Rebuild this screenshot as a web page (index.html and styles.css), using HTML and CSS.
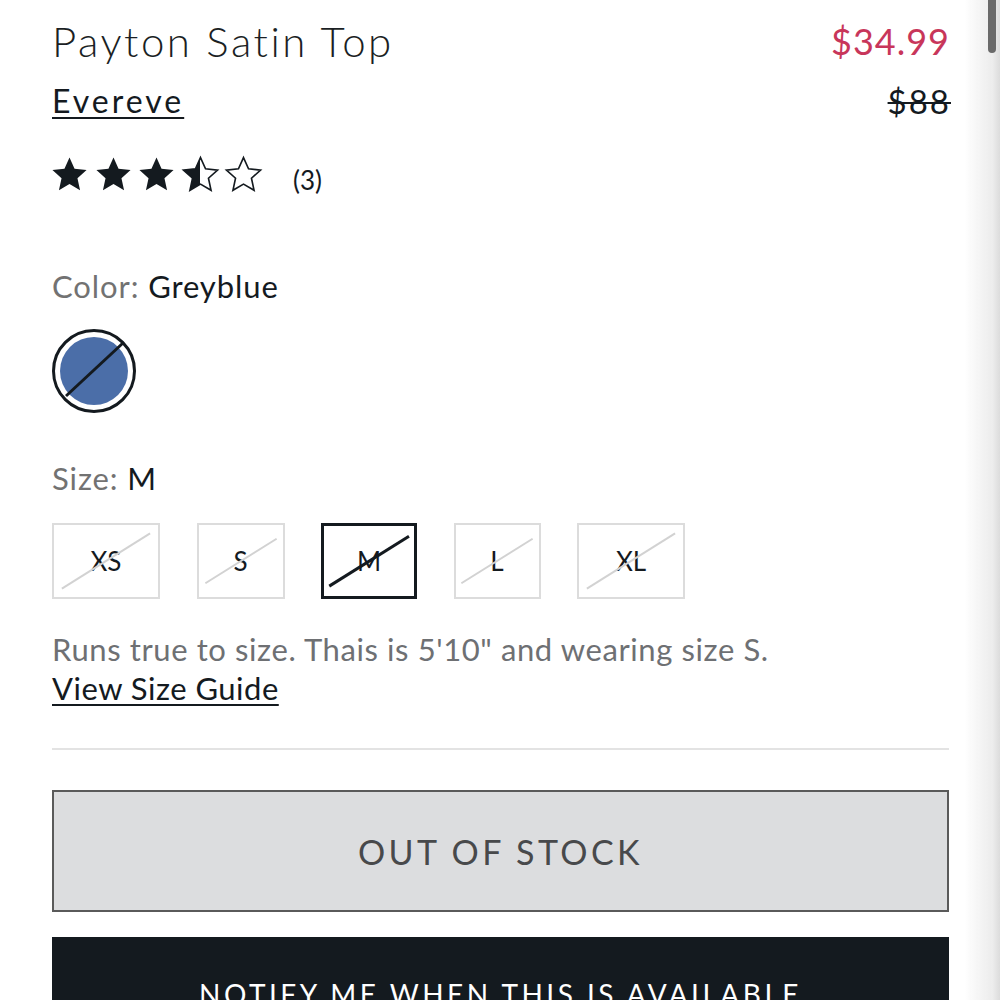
FILE: index.html
```html
<!DOCTYPE html>
<html lang="en">
<head>
<meta charset="utf-8">
<title>Payton Satin Top</title>
<link rel="stylesheet" href="styles.css">
</head>
<body>
<main class="page">
  <header class="head">
    <div class="names">
      <h1 class="title">Payton Satin Top</h1>
      <a class="brand" href="#">Evereve</a>
    </div>
    <div class="prices">
      <div class="sale">$34.99</div>
      <div class="orig">$88</div>
    </div>
  </header>

  <div class="rating">
    <div class="stars">
      <svg class="star" viewBox="0 0 24 24"><path class="full" d="M12 1.6l3.1 6.9 7.4.8-5.6 5 1.6 7.4L12 17.9l-6.5 3.8 1.6-7.4-5.6-5 7.4-.8z"/></svg>
      <svg class="star" viewBox="0 0 24 24"><path class="full" d="M12 1.6l3.1 6.9 7.4.8-5.6 5 1.6 7.4L12 17.9l-6.5 3.8 1.6-7.4-5.6-5 7.4-.8z"/></svg>
      <svg class="star" viewBox="0 0 24 24"><path class="full" d="M12 1.6l3.1 6.9 7.4.8-5.6 5 1.6 7.4L12 17.9l-6.5 3.8 1.6-7.4-5.6-5 7.4-.8z"/></svg>
      <svg class="star" viewBox="0 0 24 24"><defs><linearGradient id="half"><stop offset="50%" stop-color="#141a1f"/><stop offset="50%" stop-color="#fff"/></linearGradient></defs><path class="half" d="M12 1.6l3.1 6.9 7.4.8-5.6 5 1.6 7.4L12 17.9l-6.5 3.8 1.6-7.4-5.6-5 7.4-.8z"/></svg>
      <svg class="star" viewBox="0 0 24 24"><path class="empty" d="M12 1.6l3.1 6.9 7.4.8-5.6 5 1.6 7.4L12 17.9l-6.5 3.8 1.6-7.4-5.6-5 7.4-.8z"/></svg>
    </div>
    <span class="count">(3)</span>
  </div>

  <div class="label"><span class="key">Color:</span> <span class="val">Greyblue</span></div>
  <div class="swatches">
    <button class="swatch" aria-label="Greyblue">
      <svg viewBox="0 0 84 84"><circle cx="42" cy="42" r="40.5" fill="#fff" stroke="#141a1f" stroke-width="3"/><circle cx="42" cy="42" r="34" fill="#4b6ea8"/><line x1="14" y1="67" x2="71" y2="14" stroke="#141a1f" stroke-width="3"/></svg>
    </button>
  </div>

  <div class="label size-label"><span class="key">Size:</span> <span class="val">M</span></div>
  <div class="sizes">
    <button class="size w108">XS</button>
    <button class="size w88">S</button>
    <button class="size w96 selected">M</button>
    <button class="size w87">L</button>
    <button class="size w108">XL</button>
  </div>

  <p class="fit">Runs true to size. Thais is 5'10" and wearing size S.</p>
  <a class="guide" href="#">View Size Guide</a>

  <hr class="rule">

  <button class="btn oos">OUT OF STOCK</button>
  <button class="btn notify">NOTIFY ME WHEN THIS IS AVAILABLE</button>
</main>
<div class="scrollbar"><div class="thumb"></div></div>
</body>
</html>
```

FILE: styles.css
```css
* { box-sizing: border-box; }
html, body { margin: 0; padding: 0; background: #fff; }
body {
  font-family: "Lato", "Open Sans", sans-serif;
  color: #141a1f;
  height: 1000px;
  overflow: hidden;
}
.page {
  padding: 17px 51px 0 52px;
}
.head {
  display: flex;
  justify-content: space-between;
  align-items: flex-start;
}
.names { display: flex; flex-direction: column; align-items: flex-start; }
.title {
  margin: 0;
  font-weight: 300;
  font-size: 42px;
  line-height: 48px;
  letter-spacing: 2.5px;
  color: #1b1f24;
}
.brand {
  margin-top: 18px;
  font-size: 32px;
  line-height: 36px;
  font-weight: 400;
  letter-spacing: 3px;
  color: #141a1f;
  text-decoration: underline;
  text-decoration-thickness: 2px;
  text-underline-offset: 4px;
}
.prices { text-align: right; }
.sale {
  font-size: 36px;
  line-height: 48px;
  color: #c8365a;
  letter-spacing: 1px;
  margin-right: -1px;
}
.orig {
  margin-top: 18px;
  font-size: 33px;
  line-height: 36px;
  color: #141a1f;
  letter-spacing: 2px;
  margin-right: -2px;
  text-decoration: line-through;
  text-decoration-thickness: 2px;
}
.rating {
  margin-top: 36px;
  display: flex;
  align-items: center;
  height: 38px;
}
.stars { display: flex; gap: 4.5px; margin-left: -2px; }
.star { width: 39px; height: 39px; display: block; }
.full { fill: #141a1f; }
.half { fill: url(#half); stroke: #141a1f; stroke-width: 1; stroke-linejoin: miter; }
.empty { fill: #fff; stroke: #141a1f; stroke-width: 1; }
.count {
  margin-left: 30px;
  padding-top: 12px;
  font-size: 26px;
  color: #141a1f;
}
.label {
  margin-top: 75px;
  font-size: 31px;
  line-height: 36px;
  letter-spacing: 0.9px;
}
.key { color: #727272; }
.val { color: #141a1f; }
.swatches { margin-top: 25px; display: flex; }
.swatch {
  width: 84px; height: 84px;
  padding: 0; border: 0; background: none;
}
.swatch svg { width: 84px; height: 84px; display: block; }
.size-label { margin-top: 47px; }
.sizes {
  margin-top: 27px;
  display: flex;
  gap: 36.5px;
}
.size {
  position: relative;
  height: 76px;
  border: 2px solid #dcdcdc;
  background: #fff;
  font-family: "Lato", sans-serif;
  font-size: 26px;
  color: #141a1f;
  padding: 0;
  overflow: hidden;
}
.size::after {
  content: "";
  position: absolute;
  left: 50%; top: 50%;
  width: 104px;
  height: 2px;
  background: #d2d2d2;
  transform: translate(-50%, -50%) rotate(-32deg);
}
.w108 { width: 108px; }
.w108::after { width: 104px; }
.w88 { width: 88px; }
.w88::after { width: 84px; }
.w87 { width: 87px; }
.w87::after { width: 84px; }
.w96 { width: 96px; }
.selected { border: 3px solid #141a1f; }
.selected::after { background: #141a1f; width: 94px; height: 2.5px; }
.fit {
  margin: 31px 0 0;
  font-size: 31px;
  line-height: 39px;
  letter-spacing: 0.6px;
  color: #6e7073;
}
.guide {
  display: inline-block;
  font-size: 31px;
  line-height: 39px;
  letter-spacing: 0.5px;
  color: #141a1f;
  text-decoration: underline;
  text-decoration-thickness: 2px;
  text-underline-offset: 4px;
}
.rule {
  margin: 40px 0 0;
  border: 0;
  border-top: 2px solid #e3e3e3;
}
.btn {
  display: block;
  width: 100%;
  font-family: "Lato", sans-serif;
  text-align: center;
}
.oos {
  margin-top: 40px;
  height: 122px;
  border: 2px solid #5a5a5a;
  background: #dcdddf;
  color: #48494b;
  font-size: 34px;
  letter-spacing: 3.4px;
}
.notify {
  margin-top: 25px;
  height: 114px;
  padding: 0;
  border: 0;
  background: #141a1f;
  color: #fff;
  font-size: 28px;
  letter-spacing: 3.5px;
}
.scrollbar {
  position: fixed;
  top: 0; right: 0;
  width: 36px; height: 1000px;
  background: linear-gradient(to right, rgba(240,240,240,0), #ececec 80%, #dcdcdc);
  pointer-events: none;
}
.thumb {
  position: absolute;
  left: 24px; top: -6px;
  width: 8px; height: 59px;
  border-radius: 4px;
  background: #6a6a6a;
}
```
